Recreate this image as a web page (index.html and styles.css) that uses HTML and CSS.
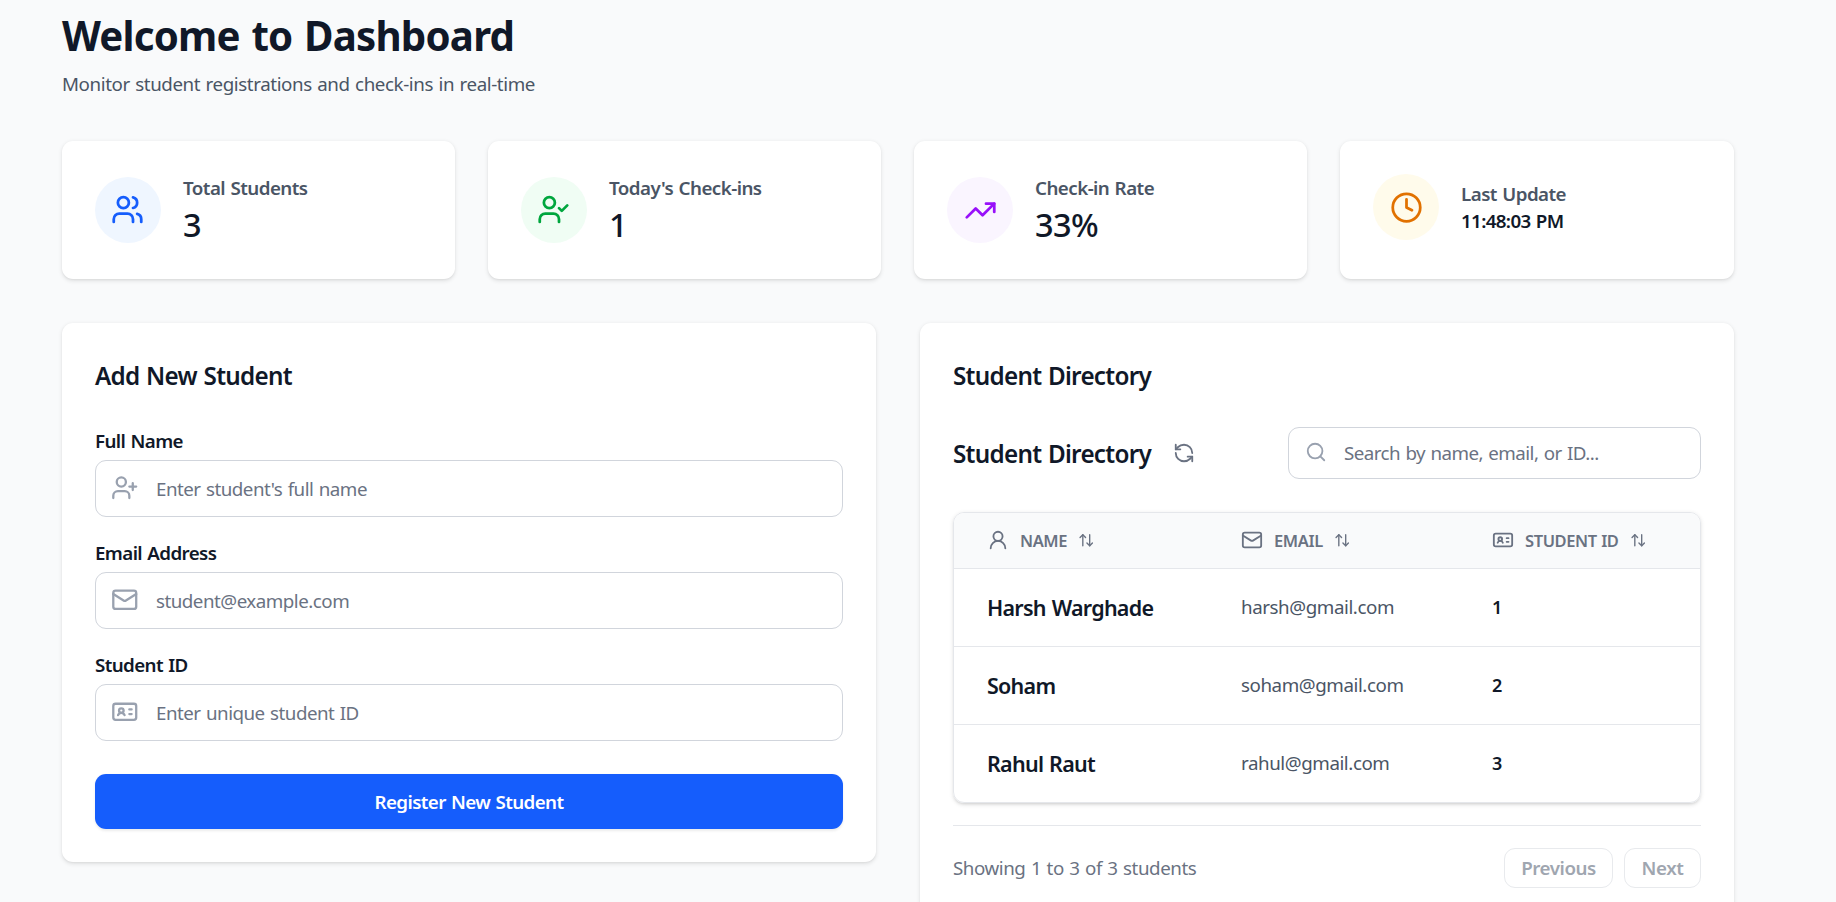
FILE: index.html
```html
<!DOCTYPE html>
<html lang="en">
<head>
<meta charset="utf-8">
<title>Dashboard</title>
<link rel="stylesheet" href="styles.css">
</head>
<body>
<svg class="sprite" aria-hidden="true">
  <symbol id="users" viewBox="0 0 24 24"><path d="M16 21v-2a4 4 0 0 0-4-4H6a4 4 0 0 0-4 4v2"/><circle cx="9" cy="7" r="4"/><path d="M22 21v-2a4 4 0 0 0-3-3.87"/><path d="M16 3.13a4 4 0 0 1 0 7.75"/></symbol>
  <symbol id="user-check" viewBox="0 0 24 24"><path d="m16 11 2 2 4-4"/><path d="M16 21v-2a4 4 0 0 0-4-4H6a4 4 0 0 0-4 4v2"/><circle cx="9" cy="7" r="4"/></symbol>
  <symbol id="trending" viewBox="0 0 24 24"><path d="M16 7h6v6"/><path d="m22 7-8.5 8.5-5-5L2 17"/></symbol>
  <symbol id="clock" viewBox="0 0 24 24"><circle cx="12" cy="12" r="10"/><path d="M12 6v6l4 2"/></symbol>
  <symbol id="user-plus" viewBox="0 0 24 24"><path d="M16 21v-2a4 4 0 0 0-4-4H6a4 4 0 0 0-4 4v2"/><circle cx="9" cy="7" r="4"/><path d="M19 8v6M22 11h-6"/></symbol>
  <symbol id="mail" viewBox="0 0 24 24"><rect x="2" y="4" width="20" height="16" rx="2"/><path d="m22 7-8.97 5.7a1.94 1.94 0 0 1-2.06 0L2 7"/></symbol>
  <symbol id="id-card" viewBox="0 0 24 24"><rect x="2" y="5" width="20" height="14" rx="2"/><path d="M16 10h2M16 14h2M6.17 15a3 3 0 0 1 5.66 0"/><circle cx="9" cy="11" r="2"/></symbol>
  <symbol id="refresh" viewBox="0 0 24 24"><path d="M21 12a9 9 0 0 0-9-9 9.75 9.75 0 0 0-6.74 2.74L3 8"/><path d="M3 3v5h5"/><path d="M3 12a9 9 0 0 0 9 9 9.75 9.75 0 0 0 6.74-2.74L21 16"/><path d="M16 16h5v5"/></symbol>
  <symbol id="search" viewBox="0 0 24 24"><circle cx="11" cy="11" r="8"/><path d="m21 21-4.3-4.3"/></symbol>
  <symbol id="user" viewBox="0 0 24 24"><circle cx="12" cy="8" r="5"/><path d="M20 21a8 8 0 0 0-16 0"/></symbol>
  <symbol id="sort" viewBox="0 0 24 24"><path d="m21 16-4 4-4-4"/><path d="M17 20V4"/><path d="m3 8 4-4 4 4"/><path d="M7 4v16"/></symbol>
</svg>
<main class="page">
  <h1 class="page-title">Welcome to Dashboard</h1>
  <p class="page-sub">Monitor student registrations and check-ins in real-time</p>

  <section class="stats">
    <div class="card stat">
      <span class="badge blue"><svg class="icon i33"><use href="#users"/></svg></span>
      <div><div class="stat-label">Total Students</div><div class="stat-value">3</div></div>
    </div>
    <div class="card stat">
      <span class="badge green"><svg class="icon i33"><use href="#user-check"/></svg></span>
      <div><div class="stat-label">Today's Check-ins</div><div class="stat-value">1</div></div>
    </div>
    <div class="card stat">
      <span class="badge purple"><svg class="icon i33"><use href="#trending"/></svg></span>
      <div><div class="stat-label">Check-in Rate</div><div class="stat-value">33%</div></div>
    </div>
    <div class="card stat stat-time">
      <span class="badge amber"><svg class="icon i33"><use href="#clock"/></svg></span>
      <div><div class="stat-label">Last Update</div><div class="time">11:48:03 PM</div></div>
    </div>
  </section>

  <section class="columns">
    <form class="card panel">
      <h2 class="heading">Add New Student</h2>
      <div class="field">
        <label class="label">Full Name</label>
        <div class="input"><svg class="icon i27"><use href="#user-plus"/></svg><span>Enter student's full name</span></div>
      </div>
      <div class="field">
        <label class="label">Email Address</label>
        <div class="input"><svg class="icon i27"><use href="#mail"/></svg><span>student@example.com</span></div>
      </div>
      <div class="field">
        <label class="label">Student ID</label>
        <div class="input"><svg class="icon i27"><use href="#id-card"/></svg><span>Enter unique student ID</span></div>
      </div>
      <button type="button" class="submit">Register New Student</button>
    </form>

    <div class="card panel">
      <h2 class="heading">Student Directory</h2>
      <div class="toolbar">
        <h3 class="subheading">Student Directory</h3>
        <svg class="icon i22 refresh"><use href="#refresh"/></svg>
        <div class="search"><svg class="icon i22"><use href="#search"/></svg><span>Search by name, email, or ID...</span></div>
      </div>
      <div class="table">
        <div class="row head">
          <div class="th"><svg class="icon i22"><use href="#user"/></svg><span>NAME</span><svg class="icon i16"><use href="#sort"/></svg></div>
          <div class="th"><svg class="icon i22"><use href="#mail"/></svg><span>EMAIL</span><svg class="icon i16"><use href="#sort"/></svg></div>
          <div class="th"><svg class="icon i22"><use href="#id-card"/></svg><span>STUDENT ID</span><svg class="icon i16"><use href="#sort"/></svg></div>
        </div>
        <div class="row"><div class="name">Harsh Warghade</div><div class="mail">harsh@gmail.com</div><div class="sid">1</div></div>
        <div class="row"><div class="name">Soham</div><div class="mail">soham@gmail.com</div><div class="sid">2</div></div>
        <div class="row"><div class="name">Rahul Raut</div><div class="mail">rahul@gmail.com</div><div class="sid">3</div></div>
      </div>
      <div class="pager">
        <span class="summary">Showing 1 to 3 of 3 students</span>
        <button type="button" class="page-btn prev">Previous</button>
        <button type="button" class="page-btn next">Next</button>
      </div>
    </div>
  </section>
</main>
</body>
</html>
```
FILE: styles.css
```css
* { box-sizing: border-box; margin: 0; padding: 0; }
html, body { height: 902px; overflow: hidden; }
body {
  background: #f9fafb;
  color: #101828;
  font-family: "Noto Sans", "Open Sans", sans-serif;
  font-size: 18.75px;
  line-height: 27.5px;
  letter-spacing: -.45px;
  word-spacing: 1px;
  white-space: nowrap;
}
button { font: inherit; letter-spacing: inherit; word-spacing: inherit; }
.sprite { display: none; }
.icon { fill: none; stroke: currentColor; stroke-width: 2; stroke-linecap: round; stroke-linejoin: round; flex: none; display: block; }
.i33 { width: 33px; height: 33px; }
.i27 { width: 27.5px; height: 27.5px; }
.i22 { width: 22px; height: 22px; }
.i16 { width: 16.5px; height: 16.5px; }

.page { padding: 11px 102px 0 62px; }
.page-title { font-size: 40.25px; line-height: 49px; font-weight: 700; letter-spacing: -.8px; word-spacing: 2px; }
.page-sub { color: #4a5565; margin-top: 10px; line-height: 27px; letter-spacing: -.41px; }

.card {
  background: #fff;
  border-radius: 11px;
  box-shadow: 0 1.4px 4px rgba(0, 0, 0, .1), 0 1.4px 2.7px -1.4px rgba(0, 0, 0, .1);
}
.stats { display: grid; grid-template-columns: 393px 393px 393px 1fr; gap: 33px; margin-top: 44px; }
.stat { display: flex; align-items: center; gap: 22px; height: 138px; padding: 33px; }
.stat > div { padding-top: 1px; }
.stat-time { align-items: flex-start; }
.stat-time > div { padding-top: 6px; }
.badge { width: 66px; height: 66px; border-radius: 50%; display: grid; place-items: center; flex: none; }
.blue { background: #eff6ff; color: #155dfc; }
.green { background: #f0fdf4; color: #00a63e; }
.purple { background: #faf5ff; color: #9810fa; }
.amber { background: #fffbeb; color: #e17100; }
.blue .icon, .green .icon { margin: -1px 0 0 -1px; }
.stat-label { color: #4a5565; font-weight: 600; letter-spacing: -.54px; }
.stat-value { font-size: 32.5px; line-height: 44px; padding-top: 2px; font-weight: 500; letter-spacing: -.6px; }
.time { font-weight: 600; letter-spacing: -.64px; line-height: 26px; }

.columns { display: grid; grid-template-columns: 1fr 1fr; gap: 44px; margin-top: 44px; align-items: start; }
.panel { padding: 33px; }
.heading, .subheading { font-size: 24.25px; font-weight: 600; line-height: 38px; letter-spacing: -.72px; }
.heading { padding-top: 1px; margin-bottom: 32px; }
.subheading { padding-top: 2px; }
.field + .field { margin-top: 22px; }
.label { display: block; font-weight: 600; line-height: 28px; margin-bottom: 5px; height: 28px; letter-spacing: -.6px; }
.input {
  display: flex; align-items: center; gap: 17.5px; height: 57px; padding-left: 15px;
  border: 1px solid #d1d5dc; border-radius: 11px; color: #6a7282; letter-spacing: -.5px;
}
.input span { padding-top: 1px; }
.input .icon, .search .icon { color: #99a1af; margin-bottom: 2px; }
.submit {
  display: block; width: 100%; height: 55px; margin-top: 33px; border: 0; border-radius: 11px;
  background: #155dfc; color: #fff; font-weight: 600; letter-spacing: -.6px; padding-top: 1px;
  box-shadow: 0 1.4px 2.7px rgba(0, 0, 0, .08);
}

.toolbar { display: flex; align-items: center; height: 52px; }
.refresh { color: #6a7282; margin-left: 22px; }
.search {
  display: flex; align-items: center; gap: 17px; width: 413px; height: 52px; margin-left: auto; padding-left: 16px;
  border: 1px solid #d1d5dc; border-radius: 11px; color: #6a7282; letter-spacing: -.54px;
}
.table {
  margin-top: 33px; border: 1px solid #e5e7eb; border-radius: 11px; overflow: hidden;
  box-shadow: 0 1.4px 4px rgba(0, 0, 0, .1), 0 1.4px 2.7px -1.4px rgba(0, 0, 0, .1);
}
.row { display: grid; grid-template-columns: 254px 251px 1fr; align-items: center; height: 78px; padding-left: 33px; }
.row + .row { border-top: 1px solid #e5e7eb; }
.head { height: 55px; background: #f9fafb; color: #6a7282; }
.th { display: flex; align-items: center; gap: 11px; font-size: 16.5px; font-weight: 600; letter-spacing: -.4px; word-spacing: .5px; }
.th .icon { margin-bottom: 1px; }
.name { font-size: 21.5px; font-weight: 600; letter-spacing: -.74px; }
.mail { color: #4a5565; letter-spacing: -.43px; padding-bottom: 1px; }
.sid { font-weight: 600; font-size: 18px; }
.pager { display: flex; align-items: center; gap: 11px; margin-top: 22px; padding-top: 22px; border-top: 1px solid #e5e7eb; }
.summary { color: #6a7282; margin-right: auto; letter-spacing: -.44px; padding-bottom: 1px; }
.page-btn { height: 40px; border: 1px solid #e8eaed; border-radius: 11px; background: #fff; color: #9fa6b0; font-weight: 600; padding-bottom: 1px; }
.prev { width: 109px; }
.next { width: 77px; }
```
